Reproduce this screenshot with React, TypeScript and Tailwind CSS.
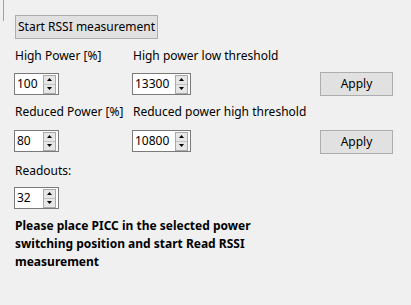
import React from "react";

function Spinner({ value, width }: { value: string; width: string }) {
  return (
    <div className={`${width} h-[22px] border border-[#7a7a7a] bg-white flex items-center justify-between`}>
      <span className="pl-[2px] text-[12px] leading-none text-black">{value}</span>
      <div className="mr-[2px] w-[13px] h-[19px] border border-[#a9a9a9] bg-[#e6e6e6] flex flex-col">
        <div className="flex-1 flex items-center justify-center border-b border-[#c4c4c4]">
          <svg width="5" height="3" viewBox="0 0 5 3"><path d="M2.5 0 L5 3 L0 3 Z" fill="#000" /></svg>
        </div>
        <div className="flex-1 flex items-center justify-center">
          <svg width="5" height="3" viewBox="0 0 5 3"><path d="M0 0 L5 0 L2.5 3 Z" fill="#000" /></svg>
        </div>
      </div>
    </div>
  );
}

function WinButton({ children, className }: { children: React.ReactNode; className: string }) {
  return (
    <div className={`${className} h-[24px] border border-[#adadad] bg-[#e1e1e1] flex items-center justify-center text-[12px] text-black`}>
      {children}
    </div>
  );
}

export default function App() {
  return (
    <div
      className="relative w-[411px] h-[305px] bg-[#f0f0f0] text-black overflow-hidden"
      style={{ fontFamily: '"Noto Sans", "Open Sans", sans-serif' }}
    >
      <div className="absolute left-[3px] top-0 w-px h-[21px] bg-[#a0a0a0]" />
      <div className="flex flex-col pl-[14px] pt-[15px]">
        <WinButton className="ml-px w-[143px]">Start RSSI measurement</WinButton>

        <div className="mt-[9px] flex h-[16px] items-center text-[12px] leading-[16px]">
          <span className="w-[118px] pl-px">High Power [%]</span>
          <span className="pl-px">High power low threshold</span>
        </div>
        <div className="mt-[8px] flex items-center h-[24px]">
          <div className="w-[118px]"><Spinner value="100" width="w-[45px]" /></div>
          <div className="w-[188px]"><Spinner value="13300" width="w-[59px]" /></div>
          <WinButton className="w-[73px]">Apply</WinButton>
        </div>

        <div className="mt-[8px] flex h-[16px] items-center text-[12px] leading-[16px]">
          <span className="w-[118px] pl-px whitespace-nowrap">Reduced Power [%]</span>
          <span className="pl-px">Reduced power high threshold</span>
        </div>
        <div className="mt-[10px] flex items-start h-[24px]">
          <div className="w-[118px]"><Spinner value="80" width="w-[45px]" /></div>
          <div className="w-[188px]"><Spinner value="10800" width="w-[59px]" /></div>
          <WinButton className="w-[73px]">Apply</WinButton>
        </div>

        <div className="mt-[9px] h-[16px] text-[12px] leading-[16px] pl-px">Readouts:</div>
        <div className="mt-[8px]">
          <Spinner value="32" width="w-[45px]" />
        </div>
        <div className="mt-[8px] pl-px text-[12px] font-bold leading-[18px]">
          Please place PICC in the selected power
          <br />
          switching position and start Read RSSI
          <br />
          measurement
        </div>
      </div>
    </div>
  );
}
